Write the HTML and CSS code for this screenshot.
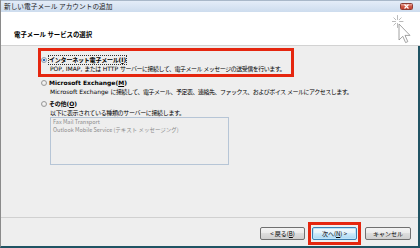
FILE: index.html
```html
<!DOCTYPE html>
<html lang="ja">
<head>
<meta charset="utf-8">
<title>新しい電子メール アカウントの追加</title>
<link rel="stylesheet" href="styles.css">
</head>
<body>
<div class="window">
  <div class="titlebar">
    <span class="title">新しい電子メール アカウントの追加</span>
    <span class="close"><svg width="5" height="5" viewBox="0 0 5 5"><path d="M0.5 0.5 L4.5 4.5 M4.5 0.5 L0.5 4.5" stroke="#fff" stroke-width="1.2"/></svg></span>
  </div>
  <div class="header">
    <span class="heading">電子メール サービスの選択</span>
    <svg class="cursor" width="20" height="30" viewBox="0 0 20 30">
      <g stroke="#a8a8a8" stroke-width="0.8" stroke-linecap="round">
        <path d="M5.5 1.5 V5.5 M5.5 9.5 V13.5 M0 7.5 H3.5 M7.5 7.5 H11 M1.8 3.8 L3.8 5.8 M9.2 3.8 L7.2 5.8 M1.8 11.2 L3.8 9.2"/>
      </g>
      <path d="M7 10 L7 26 L10.8 22.3 L13.6 28.6 L15.8 27.6 L13 21.4 L18 21.4 Z" fill="#fff" stroke="#8c8c8c" stroke-width="0.8" stroke-linejoin="round"/>
    </svg>
  </div>
  <div class="main">
    <div class="content">
      <div class="option highlight">
        <div class="opt-label"><span class="radio checked"></span><span class="label focus">インターネット電子メール<span class="lat">(<u>I</u>)</span></span></div>
        <div class="desc"><span class="lat">POP, IMAP, </span>または<span class="lat"> HTTP </span>サーバーに接続して、電子メール メッセージの送受信を行います。</div>
      </div>
      <div class="option opt-exchange">
        <div class="opt-label"><span class="radio"></span><span class="label lat">Microsoft Exchange(<u>M</u>)</span></div>
        <div class="desc"><span class="lat">Microsoft Exchange </span>に接続して、電子メール、予定表、連絡先、ファックス、およびボイス メールにアクセスします。</div>
      </div>
      <div class="option opt-other">
        <div class="opt-label"><span class="radio"></span><span class="label">その他<span class="lat">(<u>O</u>)</span></span></div>
        <div class="desc desc-other">以下に表示されている種類のサーバーに接続します。</div>
        <div class="listbox">
          <div class="item">Fax Mail Transport</div>
          <div class="item">Outlook Mobile Service (テキスト メッセージング)</div>
        </div>
      </div>
    </div>
    <div class="footer">
      <button class="btn">&lt; 戻る(<u>B</u>)</button>
      <div class="mark"><button class="btn default">次へ(<u>N</u>) &gt;</button></div>
      <button class="btn cancel">キャンセル</button>
    </div>
  </div>
</div>
</body>
</html>
```
FILE: styles.css
```css
html, body {
  margin: 0;
  padding: 0;
}
body {
  width: 420px;
  height: 248px;
  overflow: hidden;
  background: #1f5363;
  font-family: "Noto Sans CJK JP", "Liberation Sans", sans-serif;
  color: #000;
}
.window {
  width: 420px;
  height: 248px;
  box-sizing: border-box;
  display: flex;
  flex-direction: column;
  border-left: 1px solid #8a8a8a;
  border-bottom: 2px solid #1f5363;
  background: #eeeeee;
}
.titlebar {
  flex: none;
  height: 12px;
  box-sizing: border-box;
  display: flex;
  align-items: center;
  justify-content: space-between;
  padding: 0 7px 0 3px;
  border-top: 1px solid #a9b8c9;
  background: linear-gradient(#e4edf8, #cddcee);
}
.title {
  font-size: 6.7px;
  line-height: 9px;
  color: #1a1a1a;
}
.close {
  width: 13px;
  height: 7px;
  box-sizing: border-box;
  display: flex;
  align-items: center;
  justify-content: center;
  border: 1px solid #8e3b33;
  border-radius: 1.5px;
  background: linear-gradient(#e8a89c, #cf5a48 50%, #c23f2e);
}
.close svg {
  display: block;
}
.header {
  flex: none;
  position: relative;
  height: 34px;
  box-sizing: border-box;
  padding: 6px 0 0 13px;
  background: #fff;
  border-bottom: 1px solid #d2d2d2;
}
.heading {
  font-size: 6.4px;
  line-height: 10px;
  font-weight: bold;
}
.cursor {
  position: absolute;
  left: 391px;
  top: 2px;
}
.main {
  flex: 1;
  min-height: 0;
  display: flex;
  flex-direction: column;
  border-right: 2px solid #1f5363;
}
.content {
  flex: 1;
  padding: 2px 0 0 37px;
}
.option {
  padding-left: 3px;
}
.highlight {
  width: 256px;
  box-sizing: border-box;
  padding: 4px 0 1px 0;
  border: 3px solid #e5260f;
}
.opt-exchange {
  margin-top: 1px;
}
.opt-other {
  margin-top: 3px;
}
.opt-label {
  display: flex;
  align-items: center;
  height: 9px;
}
.radio {
  width: 6px;
  height: 6px;
  box-sizing: border-box;
  border: 1px solid #9b9b9b;
  border-radius: 50%;
  background: radial-gradient(circle at 50% 40%, #fafafa, #d9d9d9);
  margin-right: 2px;
  flex: none;
}
.radio.checked {
  background: radial-gradient(circle, #2c6ec0 0, #2c6ec0 1.3px, #e8e8e8 1.6px);
  border-color: #8ea0b3;
}
.label {
  font-family: "DejaVu Sans", "Noto Sans CJK JP", sans-serif;
  font-size: 6px;
  line-height: 8px;
  font-weight: bold;
  letter-spacing: -0.2px;
}
.label.focus {
  outline: 1px dotted #333;
  outline-offset: 0;
}
.desc {
  padding-left: 9px;
  font-family: "DejaVu Sans", "Noto Sans CJK JP", sans-serif;
  font-size: 6px;
  line-height: 9px;
  letter-spacing: -0.5px;
  white-space: nowrap;
}
.desc-other {
  letter-spacing: -0.35px;
}
.lat {
  letter-spacing: 0;
}
.listbox {
  margin-left: 9px;
  width: 179px;
  height: 48px;
  box-sizing: border-box;
  border: 1px solid #b6c5d6;
  padding: 0 0 0 2px;
}
.item {
  font-size: 5.5px;
  line-height: 8px;
  color: #8a8a8a;
  white-space: nowrap;
}
.footer {
  flex: none;
  height: 29px;
  box-sizing: border-box;
  display: flex;
  align-items: center;
  justify-content: flex-end;
  padding: 4px 7px 1px 0;
  border-top: 1px solid #d0d0d0;
}
.btn {
  width: 45px;
  height: 13px;
  box-sizing: border-box;
  padding: 0;
  margin: 0;
  font-family: "Noto Sans CJK JP", "Liberation Sans", sans-serif;
  font-size: 6px;
  line-height: 11px;
  color: #000;
  border: 1px solid #707070;
  border-radius: 2px;
  background: linear-gradient(#f3f3f3 0, #ebebeb 45%, #dddddd 50%, #cfcfcf 100%);
}
.mark {
  margin-left: 3px;
  padding: 2px 1px;
  border: 3px solid #e5260f;
  display: flex;
}
.default {
  border-color: #3c7fb1;
  background: linear-gradient(#f2f9fd 0, #e4f3fb 45%, #cfeafa 50%, #a9d8f3 100%);
  box-shadow: inset 0 0 0 1px #bde4fa;
}
.cancel {
  width: 46px;
  margin-left: 4px;
}
```
